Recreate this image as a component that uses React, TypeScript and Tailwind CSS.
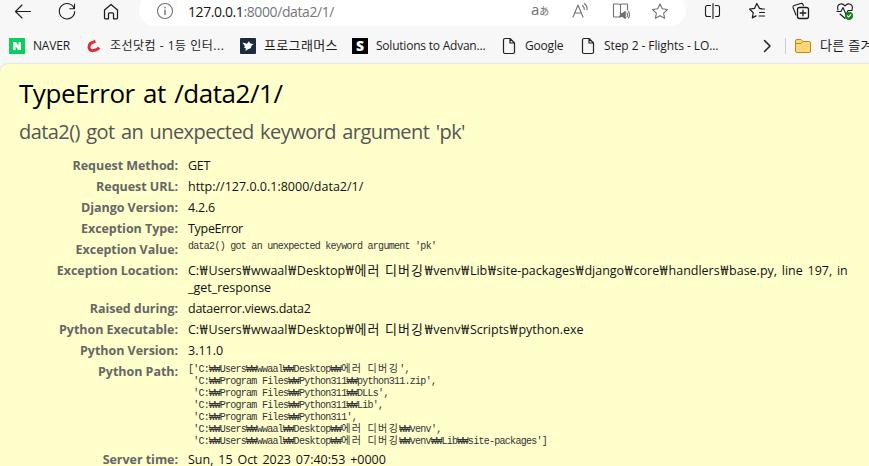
import React from "react";

const UI = "font-['Open_Sans','Noto_Sans_CJK_KR',sans-serif]";

/* Hangul sits on a double-width cell inside the monospace blocks. */
function Mono({ text }: { text: string }) {
  return (
    <>
      {text.split(/([가-힣]+)/).map((part, i) =>
        /[가-힣]/.test(part) ? (
          <span key={i} className="font-['Noto_Sans_CJK_KR'] text-[10px] leading-[0] tracking-[1.35px]">{part}</span>
        ) : (
          <span key={i}>{part}</span>
        ),
      )}
    </>
  );
}

/* Windows paths use wide won signs and loosely set Hangul. */
function WinPath({ text }: { text: string }) {
  return (
    <>
      {text.split(/([가-힣]+|₩)/).map((part, i) => {
        if (part === "₩") return <span key={i} className="ml-[0.700px] text-[14px] leading-[0] tracking-[0.900px]">₩</span>;
        if (/[가-힣]/.test(part)) return <span key={i} className="text-[13px] leading-[0] tracking-[1px]">{part}</span>;
        return <span key={i}>{part}</span>;
      })}
    </>
  );
}

function Icon({ children, className = "", size = 20 }: { children: React.ReactNode; className?: string; size?: number }) {
  return (
    <svg width={size} height={size} viewBox={`0 0 ${size} ${size}`} fill="none" stroke="currentColor" strokeWidth="1.1" strokeLinecap="round" strokeLinejoin="round" className={`shrink-0 ${className}`}>
      {children}
    </svg>
  );
}

const PageIcon = () => (
  <svg width="14" height="18" viewBox="0 0 14 18" fill="none" stroke="#222" strokeWidth="1.200" strokeLinejoin="round" className="shrink-0">
    <path d="M3 1.500h5l4.500 4.500v9q0 1.500-1.500 1.500H3q-1.500 0-1.500-1.500V3q0-1.500 1.500-1.500zM8 1.500V6h4.500" />
  </svg>
);

function Toolbar() {
  return (
    <div className="flex h-[27px] items-start overflow-hidden">
      <div className="flex h-[22px] w-[139px] shrink-0 items-center pl-[13px] text-[#1b1b1b]">
        <Icon><path d="M2.500 10.500h15M9 4l-6.500 6.500L9 17" /></Icon>
        <Icon className="ml-6"><path d="M17.200 7.500a7.700 7.700 0 1 0 .5 3M17.500 3v4.800h-4.800" /></Icon>
        <Icon className="ml-6"><path d="M3.500 9L10 3.500 16.500 9v8q0 .8-.8.800h-3.200v-5q0-1-1-1h-3q-1 0-1 1v5H4.300q-.8 0-.8-.8z" strokeWidth="1.250" /></Icon>
      </div>
      <div className="mt-[-6px] flex h-8 w-[547px] shrink-0 items-center rounded-full bg-white pl-4 pt-[2px] text-[#717171]">
        <Icon><circle cx="10" cy="10" r="7.500" /><path d="M10 9v4.500M10 6.300v.4" strokeWidth="1.400" /></Icon>
        <span className="ml-[13px] w-[343px] whitespace-nowrap text-[14px] tracking-[-0.400px] text-[#767676]">
          <span className="text-[#151515]">127.0.0.1</span>:8000/data2/1/
        </span>
        <span className="-mt-1 flex w-5 items-baseline whitespace-nowrap text-[15px] leading-5">a<span className="font-['Noto_Sans_CJK_JP'] text-[10px] leading-none">あ</span></span>
        <Icon className="ml-5"><path d="M2 16L7 4l5 12M3.700 12h6.600M11.500 4.500q2 1.500 1.800 4M13.500 2.700q3 2.300 2.600 6" /></Icon>
        <Icon className="ml-5"><path d="M9.500 4v12H3q-.5 0-.5-.5v-12q0-.5.500-.5h5q1.500 0 1.500 1zq0-1 1.500-1h5q.5 0 .5.500V9M9.500 16q0-1-1-1" /><path d="M9.700 12.500h2l2.500-2v7l-2.500-2h-2z" fill="currentColor" /><path d="M16 12q1 2 0 4M17.500 10.500q2 3.500 0 6.500" /></Icon>
        <Icon className="ml-[19px]"><path d="M10 3l2.250 4.800 5.250.7-3.850 3.600.95 5.200L10 14.800l-4.600 2.500.95-5.200L2.500 8.500l5.250-.7z" /></Icon>
      </div>
      <div className="flex h-[22px] shrink-0 items-center gap-[24px] pl-[17px] text-[#1b1b1b]">
        <Icon><path d="M7.500 4.500h-3q-2 0-2 2v7q0 2 2 2h3M12.500 4.500h2q2 0 2 2v7q0 2-2 2h-2M10 2.500v15" /></Icon>
        <Icon><path d="M14.500 7.700l-2-.3L9.800 2.500 7.500 7.400l-5 .7 3.800 3.600-1 5.200 3.700-2M14 8h3.500M12.500 11.500h5M12 15h5.500" strokeWidth="1.200" /></Icon>
        <Icon><path d="M5 14L2.200 7q-.7-2 1-2.500l6.500-2q1.700-.5 2.300 1l.4 1.200" /><rect x="6.500" y="6.500" width="11" height="11" rx="2" strokeWidth="1.300" /><path d="M12 9.200v5.600M9.200 12h5.600" strokeWidth="1.300" /></Icon>
        <Icon><path d="M3 9q-1.500-5 2.500-6 2.500-.6 4.500 2 2-2.600 4.500-2 4 1 2.500 6M2 10.500h4l2-4 3 7 2-4h4M5 13l5 4.500" /><circle cx="14" cy="14.800" r="3.600" fill="#168026" stroke="#168026" /><path d="M12.400 14.900l1.200 1.100 2.200-2.400" stroke="#fff" /></Icon>
      </div>
    </div>
  );
}

function Bookmarks() {
  const label = "shrink-0 whitespace-nowrap";
  return (
    <div className="flex h-[37px] items-center overflow-hidden pl-[9px] text-[12px] text-[#1d1d1d]">
      <svg width="16" height="16" className="shrink-0"><path d="M0 0h16v16H0z" fill="#08cf5d" /><path d="M4 12V4h3l2.500 3.700V4H12v8H9.200L6.600 8.300V12z" fill="#fff" /></svg>
      <span className={`${label} ml-2 w-[54px] tracking-[-0.200px]`}>NAVER</span>
      <svg width="14" height="16" className="shrink-0"><path d="M8.500 3.500Q2 4.500 2 9q0 4 4.500 3.600 4-.4 5.500-3" fill="none" stroke="#df2d38" strokeWidth="3" /></svg>
      <span className={`${label} ml-[9px] w-[130px] tracking-[0.500px]`}>조선닷컴 - 1등 인터...</span>
      <svg width="16" height="16" className="shrink-0"><rect width="16" height="16" rx="1" fill="#1d2b40" /><path d="M2.500 4.500l4.500 1.300 2-2.500 1 2 3.500 1-2 1.500q-.2 3-3.500 3.500L5.500 13l.3-2.500-2-1.200 1.200-.8z" fill="#fff" /></svg>
      <span className={`${label} ml-2 w-[88px] text-[13px] tracking-[0.350px]`}>프로그래머스</span>
      <span className="flex size-4 shrink-0 items-center justify-center bg-black text-[14px] font-extrabold text-white">S</span>
      <span className={`${label} ml-2 w-[126px] tracking-[-0.220px]`}>Solutions to Advan...</span>
      <PageIcon />
      <span className={`${label} ml-[9px] w-[56px] tracking-[-0.200px]`}>Google</span>
      <PageIcon />
      <span className={`${label} ml-[9px] w-[155px] tracking-[-0.080px]`}>Step 2 - Flights - LO...</span>
      <Icon size={14}><path d="M5.500 1.500L11 7l-5.500 5.500" strokeWidth="1.500" /></Icon>
      <span className="ml-3 h-4 w-px shrink-0 bg-[#ccc]" />
      <svg width="18" height="16" className="ml-[8px] shrink-0"><path d="M1.500 3q0-1.500 1.500-1.500h4l2 2h6q1.500 0 1.500 1.500v8q0 1.500-1.500 1.500H3q-1.500 0-1.500-1.500z" fill="#ffd778" stroke="#bf8b18" /><path d="M2 5.500h5l2-2" fill="none" stroke="#bf8b18" /></svg>
      <span className={`${label} ml-2 text-[13px] tracking-[0.300px]`}>다른 즐겨찾기</span>
    </div>
  );
}

const mono = "font-['Liberation_Mono','Noto_Sans_CJK_KR',monospace] text-[10px] leading-[12px] tracking-[-0.72px] whitespace-pre text-[#333]";

const PATHS = [
  "['C:₩₩Users₩₩wwaal₩₩Desktop₩₩에러 디버깅',",
  " 'C:₩₩Program Files₩₩Python311₩₩python311.zip',",
  " 'C:₩₩Program Files₩₩Python311₩₩DLLs',",
  " 'C:₩₩Program Files₩₩Python311₩₩Lib',",
  " 'C:₩₩Program Files₩₩Python311',",
  " 'C:₩₩Users₩₩wwaal₩₩Desktop₩₩에러 디버깅₩₩venv',",
  " 'C:₩₩Users₩₩wwaal₩₩Desktop₩₩에러 디버깅₩₩venv₩₩Lib₩₩site-packages']",
];

function Row({ name, valueClass = "", className = "h-[21px]", children }: { name: string; valueClass?: string; className?: string; children: React.ReactNode }) {
  return (
    <div className={`flex shrink-0 ${className}`}>
      <div className="w-[178px] shrink-0 whitespace-nowrap text-right text-[12.500px] font-bold leading-[17px] tracking-[-0.040px] text-[#666]">{name}</div>
      <div className={`ml-[10px] whitespace-nowrap text-[12.500px] leading-[17px] text-[#111] ${valueClass}`}>{children}</div>
    </div>
  );
}

function ErrorReport() {
  return (
    <main className="h-[402px] overflow-hidden rounded-tl-lg bg-[#ffffcc] shadow-[0_0_2px_#bbb]">
      <h1 className="ml-[19px] mt-[12px] h-[34px] whitespace-nowrap text-[26px] leading-[34px] tracking-[-0.450px] [word-spacing:2px] text-black">TypeError at /data2/1/</h1>
      <h2 className="ml-[19px] mt-[9px] h-[26px] whitespace-nowrap text-[20px] leading-[26px] tracking-[-0.560px] [word-spacing:1.700px] text-[#555]">data2() got an unexpected keyword argument 'pk'</h2>
      <div className="mt-[12px] flex flex-col">
        <Row name="Request Method:" valueClass="tracking-[-0.300px]">GET</Row>
        <Row name="Request URL:">http://127.0.0.1:8000/data2/1/</Row>
        <Row name="Django Version:" valueClass="tracking-[-0.200px]">4.2.6</Row>
        <Row name="Exception Type:" valueClass="tracking-[-0.300px]">TypeError</Row>
        <Row name="Exception Value:"><pre className={mono}>data2() got an unexpected keyword argument 'pk'</pre></Row>
        <Row name="Exception Location:" className="h-[38px]" valueClass="[word-spacing:1.500px]"><WinPath text="C:₩Users₩wwaal₩Desktop₩에러 디버깅₩venv₩Lib₩site-packages₩django₩core₩handlers₩base.py, line 197, in" /><br />_get_response</Row>
        <Row name="Raised during:" valueClass="tracking-[-0.240px]">dataerror.views.data2</Row>
        <Row name="Python Executable:" valueClass="[word-spacing:1.500px]"><WinPath text="C:₩Users₩wwaal₩Desktop₩에러 디버깅₩venv₩Scripts₩python.exe" /></Row>
        <Row name="Python Version:">3.11.0</Row>
        <Row name="Python Path:" className="h-[88px]">
          <pre className={`${mono} mt-px`}>{PATHS.map((p) => <div key={p} className="h-3"><Mono text={p} /></div>)}</pre>
        </Row>
        <Row name="Server time:" valueClass="[word-spacing:1.600px]">Sun, 15 Oct 2023 07:40:53 +0000</Row>
      </div>
    </main>
  );
}

export default function App() {
  return (
    <div className={`h-[466px] w-[869px] overflow-hidden bg-[#f7f7f7] ${UI}`}>
      <Toolbar />
      <Bookmarks />
      <ErrorReport />
    </div>
  );
}
